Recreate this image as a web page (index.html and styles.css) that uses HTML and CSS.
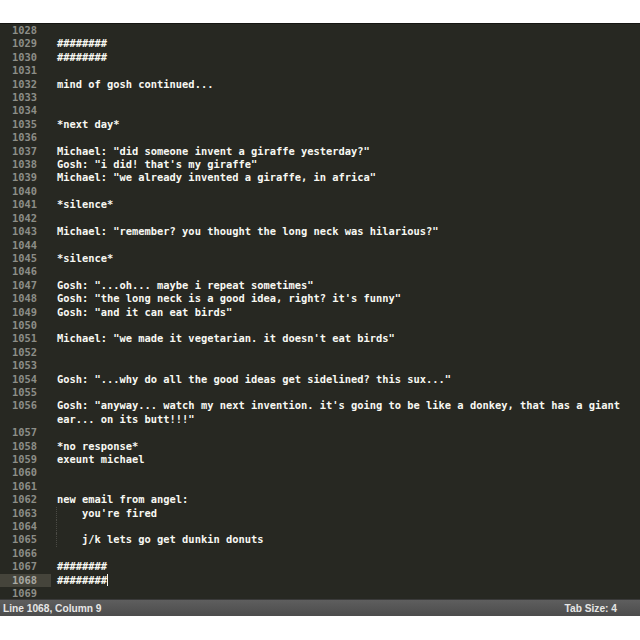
FILE: index.html
```html
<!DOCTYPE html>
<html>
<head>
<meta charset="utf-8">
<link rel="stylesheet" href="styles.css">
</head>
<body>
<div class="window">
  <div class="editor">
    <div class="row"><span class="num">1028</span><span class="txt"></span></div>
    <div class="row"><span class="num">1029</span><span class="txt">########</span></div>
    <div class="row"><span class="num">1030</span><span class="txt">########</span></div>
    <div class="row"><span class="num">1031</span><span class="txt"></span></div>
    <div class="row"><span class="num">1032</span><span class="txt">mind of gosh continued...</span></div>
    <div class="row"><span class="num">1033</span><span class="txt"></span></div>
    <div class="row"><span class="num">1034</span><span class="txt"></span></div>
    <div class="row"><span class="num">1035</span><span class="txt">*next day*</span></div>
    <div class="row"><span class="num">1036</span><span class="txt"></span></div>
    <div class="row"><span class="num">1037</span><span class="txt">Michael: "did someone invent a giraffe yesterday?"</span></div>
    <div class="row"><span class="num">1038</span><span class="txt">Gosh: "i did! that's my giraffe"</span></div>
    <div class="row"><span class="num">1039</span><span class="txt">Michael: "we already invented a giraffe, in africa"</span></div>
    <div class="row"><span class="num">1040</span><span class="txt"></span></div>
    <div class="row"><span class="num">1041</span><span class="txt">*silence*</span></div>
    <div class="row"><span class="num">1042</span><span class="txt"></span></div>
    <div class="row"><span class="num">1043</span><span class="txt">Michael: "remember? you thought the long neck was hilarious?"</span></div>
    <div class="row"><span class="num">1044</span><span class="txt"></span></div>
    <div class="row"><span class="num">1045</span><span class="txt">*silence*</span></div>
    <div class="row"><span class="num">1046</span><span class="txt"></span></div>
    <div class="row"><span class="num">1047</span><span class="txt">Gosh: "...oh... maybe i repeat sometimes"</span></div>
    <div class="row"><span class="num">1048</span><span class="txt">Gosh: "the long neck is a good idea, right? it's funny"</span></div>
    <div class="row"><span class="num">1049</span><span class="txt">Gosh: "and it can eat birds"</span></div>
    <div class="row"><span class="num">1050</span><span class="txt"></span></div>
    <div class="row"><span class="num">1051</span><span class="txt">Michael: "we made it vegetarian. it doesn't eat birds"</span></div>
    <div class="row"><span class="num">1052</span><span class="txt"></span></div>
    <div class="row"><span class="num">1053</span><span class="txt"></span></div>
    <div class="row"><span class="num">1054</span><span class="txt">Gosh: "...why do all the good ideas get sidelined? this sux..."</span></div>
    <div class="row"><span class="num">1055</span><span class="txt"></span></div>
    <div class="row"><span class="num">1056</span><span class="txt">Gosh: "anyway... watch my next invention. it's going to be like a donkey, that has a giant<br>ear... on its butt!!!"</span></div>
    <div class="row"><span class="num">1057</span><span class="txt"></span></div>
    <div class="row"><span class="num">1058</span><span class="txt">*no response*</span></div>
    <div class="row"><span class="num">1059</span><span class="txt">exeunt michael</span></div>
    <div class="row"><span class="num">1060</span><span class="txt"></span></div>
    <div class="row"><span class="num">1061</span><span class="txt"></span></div>
    <div class="row"><span class="num">1062</span><span class="txt">new email from angel:</span></div>
    <div class="row"><span class="num">1063</span><span class="txt guide">    you're fired</span></div>
    <div class="row"><span class="num">1064</span><span class="txt guide"></span></div>
    <div class="row"><span class="num">1065</span><span class="txt guide">    j/k lets go get dunkin donuts</span></div>
    <div class="row"><span class="num">1066</span><span class="txt"></span></div>
    <div class="row"><span class="num">1067</span><span class="txt">########</span></div>
    <div class="row current"><span class="num">1068</span><span class="txt">########<span class="cursor"></span></span></div>
    <div class="row"><span class="num">1069</span><span class="txt"></span></div>
  </div>
  <div class="statusbar">
    <span class="status-left">Line 1068, Column 9</span>
    <span class="status-right">Tab Size: 4</span>
  </div>
</div>
</body>
</html>
```
FILE: styles.css
```css
html, body {
  margin: 0;
  padding: 0;
  background: #ffffff;
}

body {
  padding-top: 23px;
  width: 640px;
  height: 640px;
  box-sizing: border-box;
  overflow: hidden;
}

.window {
  display: flex;
  flex-direction: column;
}

.editor {
  background: #272822;
  height: 576px;
  overflow: hidden;
  border-top: 1px solid #151512;
  box-sizing: border-box;
  font-family: "DejaVu Sans Mono", "Liberation Mono", monospace;
  font-size: 10.4px;
  line-height: 13.4px;
}

.row {
  display: grid;
  grid-template-columns: 51px 1fr;
  column-gap: 6px;
}

.num {
  color: #8d8e88;
  text-align: right;
  padding-right: 14px;
  font-weight: 600;
}

.current .num {
  background: #45443b;
  color: #a8a8a2;
}

.txt {
  color: #f8f8f2;
  white-space: pre;
  min-height: 13.4px;
  font-weight: 600;
}

.guide {
  border-left: 1px dotted #4a4a44;
  margin-left: -1px;
}

.cursor {
  display: inline-block;
  width: 1px;
  height: 12px;
  background: #f8f8f0;
  vertical-align: -2px;
}

.statusbar {
  height: 17px;
  background: linear-gradient(#5e5e5e, #4c4c4c);
  border-top: 1px solid #3a3a3a;
  box-sizing: border-box;
  display: flex;
  justify-content: space-between;
  align-items: center;
  padding: 0 23px 0 3px;
  font-family: "Liberation Sans", Arial, sans-serif;
  font-size: 10.2px;
  font-weight: bold;
  color: #e6e6e6;
}
```
